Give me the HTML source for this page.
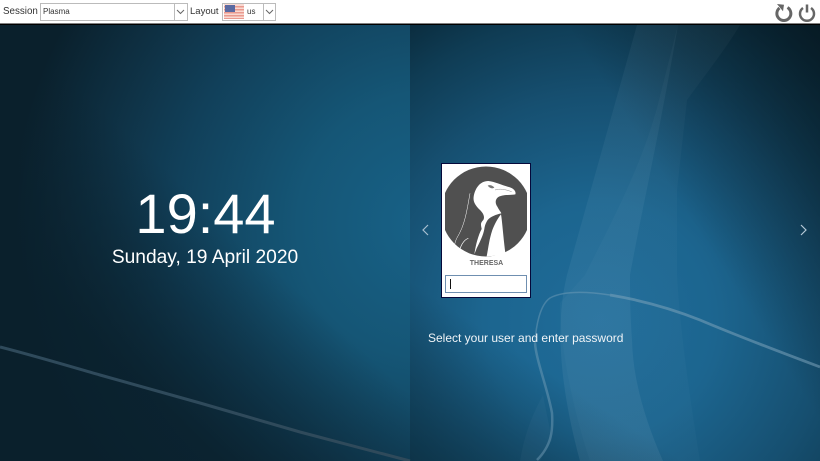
<!DOCTYPE html>
<html><head><meta charset="utf-8"><style>
html,body{margin:0;padding:0;width:820px;height:461px;overflow:hidden;background:#0a202d;font-family:"Liberation Sans",sans-serif}
svg{position:absolute;left:0;top:0}
</style></head><body>
<svg width="820" height="461" viewBox="0 0 820 461" xmlns="http://www.w3.org/2000/svg">
<defs>
<radialGradient id="l" gradientUnits="userSpaceOnUse" cx="430" cy="225" r="440">
<stop offset="0" stop-color="#186288"/><stop offset=".3" stop-color="#155676"/><stop offset=".58" stop-color="#11405a"/><stop offset=".73" stop-color="#0f3347"/><stop offset=".95" stop-color="#0a202c"/><stop offset="1" stop-color="#0a202c"/>
</radialGradient>
<linearGradient id="lb" x1="330" y1="320" x2="210" y2="450" gradientUnits="userSpaceOnUse"><stop offset="0" stop-color="#0a202c" stop-opacity="0"/><stop offset="1" stop-color="#0a202c" stop-opacity=".85"/></linearGradient>
<radialGradient id="r" gradientUnits="userSpaceOnUse" cx="600" cy="320" r="390">
<stop offset="0" stop-color="#1f6c9a"/><stop offset=".3" stop-color="#1c658f"/><stop offset=".58" stop-color="#164f70"/><stop offset=".78" stop-color="#0f3c54"/><stop offset="1" stop-color="#07202d"/>
</radialGradient>
<linearGradient id="rt" x1="640" y1="140" x2="820" y2="25" gradientUnits="userSpaceOnUse"><stop offset="0" stop-color="#06161e" stop-opacity="0"/><stop offset="1" stop-color="#06161e" stop-opacity=".75"/></linearGradient>
<linearGradient id="rb" x1="500" y1="340" x2="420" y2="461" gradientUnits="userSpaceOnUse"><stop offset="0" stop-color="#0a2a3a" stop-opacity="0"/><stop offset="1" stop-color="#0a2a3a" stop-opacity=".7"/></linearGradient>
<linearGradient id="sw" gradientUnits="userSpaceOnUse" x1="0" y1="25" x2="0" y2="461"><stop offset="0" stop-color="#a8c4d4" stop-opacity=".06"/><stop offset=".55" stop-color="#b8d8ea" stop-opacity=".07"/><stop offset="1" stop-color="#b8c8d4" stop-opacity=".09"/></linearGradient>
<linearGradient id="sw2" gradientUnits="userSpaceOnUse" x1="0" y1="25" x2="0" y2="461"><stop offset="0" stop-color="#b8c4c8" stop-opacity=".04"/><stop offset="1" stop-color="#b8d8ea" stop-opacity=".025"/></linearGradient>
<clipPath id="pc"><rect x="445" y="166" width="82" height="92"/></clipPath>
</defs>
<rect width="410" height="461" fill="url(#l)"/>
<rect width="410" height="461" fill="url(#lb)"/>
<rect x="410" width="410" height="461" fill="url(#r)"/>
<rect x="410" width="410" height="461" fill="url(#rt)"/>
<rect x="410" width="410" height="461" fill="url(#rb)"/>
<path d="M637 25L567 275C556 320 558 380 580 461H663C645 420 633 380 632 340C630 310 630 290 630 275C640 220 660 130 678 25Z" fill="url(#sw)"/>
<path d="M678 25L657 108C640 170 610 225 585 275L560 303C560 340 570 400 590 461H700C690 400 680 330 677 275C677 230 677 200 677 190L687 100C705 75 725 50 740 25Z" fill="url(#sw2)"/>
<path d="M520 461C525 430 535 410 543 395L552 440L540 461Z" fill="#b8d8ea" opacity=".04"/>
<path d="M0 347C35 356 65 365 100 375L200 403L300 432L410 461" fill="none" stroke="#2f4a5b" stroke-width="3"/>
<path d="M820 367C780 352 740 337 700 320C670 308 640 300 610 295" fill="none" stroke="#7ba2ba" stroke-width="2.800" opacity=".55"/>
<path d="M610 295C590 292 565 290 550 298C540 305 536 325 535 343" fill="none" stroke="#7ba2ba" stroke-width="1.500" opacity=".45"/>
<path d="M535 343C536 360 548 390 552 413C553 430 552 445 537 460" fill="none" stroke="#7ba2ba" stroke-width="2.500" opacity=".45"/>
<rect width="820" height="24" fill="#fff"/>
<rect y="23.500" width="820" height="1.500" fill="#000"/>
<text x="3" y="14" font-size="9.800" fill="#333">Session</text>
<rect x="40.500" y="3.500" width="147" height="17" fill="#fff" stroke="#bbb"/>
<line x1="174.500" y1="4" x2="174.500" y2="20" stroke="#bbb"/>
<text x="43" y="14" font-size="8" fill="#333">Plasma</text>
<path d="M177 10l3.500 3.500 3.500-3.500" fill="none" stroke="#666"/>
<text x="190" y="14" font-size="9.500" fill="#333">Layout</text>
<rect x="222.500" y="3.500" width="53" height="17" fill="#fff" stroke="#bbb"/>
<line x1="263.500" y1="4" x2="263.500" y2="20" stroke="#bbb"/>
<rect x="224" y="4" width="20" height="15" fill="#f9d9d2"/>
<rect x="224" y="6" width="20" height="1.500" fill="#ea9a8f"/><rect x="224" y="9" width="20" height="1.500" fill="#ea9a8f"/><rect x="224" y="12" width="20" height="1.500" fill="#ea9a8f"/><rect x="224" y="15" width="20" height="1.500" fill="#ea9a8f"/><rect x="224" y="18" width="20" height="1" fill="#ea9a8f"/>
<rect x="225" y="5" width="10" height="7" fill="#5a6aa2"/>
<text x="247" y="14" font-size="8" fill="#333">us</text>
<path d="M266 10l3.500 3.500 3.500-3.500" fill="none" stroke="#666"/>
<path d="M779.500 8a7 7 0 1 0 8-.5" fill="none" stroke="#666" stroke-width="3"/><path d="M777 4l7 .8-1 6.500z" fill="#666"/>
<path d="M803 8a7 7 0 1 0 8 0" fill="none" stroke="#666" stroke-width="2.500"/><path d="M807 4.500v8" fill="none" stroke="#666" stroke-width="2.500"/>
<text x="205.500" y="233" font-size="56" fill="#fff" text-anchor="middle">19:44</text>
<text x="205" y="263" font-size="19.200" fill="#fff" text-anchor="middle">Sunday, 19 April 2020</text>
<path d="M428 225l-5 5 5 5" fill="none" stroke="#a8bfd0" stroke-width="1.200"/>
<path d="M801 225l5 5-5 5" fill="none" stroke="#b5c8d6" stroke-width="1.200"/>
<rect x="441.500" y="163.500" width="89" height="134" fill="#fff" stroke="#05083a"/>
<g clip-path="url(#pc)"><circle cx="486" cy="211.500" r="45" fill="#505050"/></g>
<g transform="translate(415 155) scale(.33333)">
<path d="M176 125C180 100 195 78 220 78C240 80 258 90 285 97C297 101 304 110 301 118C285 121 265 118 250 126C240 133 240 145 247 155C252 165 257 170 259 175C245 178 225 185 218 195C212 205 210 210 208 222C205 240 195 260 185 280L178 298C182 270 190 240 200 222C198 210 195 205 205 195C210 185 205 175 195 165C180 150 174 140 176 125Z" fill="#fff"/>
<path d="M258 178C262 200 265 250 272 300L215 304C220 280 222 255 232 225C240 205 248 190 258 178Z" fill="#fff"/>
<path d="M165 115C155 170 150 210 125 250C120 262 118 270 116 285" fill="none" stroke="#fff" stroke-width="1.500"/>
<path d="M160 250C145 255 135 275 132 295" fill="none" stroke="#fff" stroke-width="2"/>
<path d="M218 92C224 88 234 92 238 98C232 102 224 100 218 92Z" fill="#777"/>
<path d="M240 105C255 100 270 103 290 110" fill="none" stroke="#888" stroke-width="1.500"/>
</g>
<text x="486.500" y="265" font-size="7" font-weight="700" fill="#666" text-anchor="middle">THERESA</text>
<rect x="445.500" y="275.500" width="81" height="17" fill="#fff" stroke="#6f8fb0"/>
<line x1="450.500" y1="279" x2="450.500" y2="289" stroke="#111"/>
<text x="428" y="342" font-size="12" fill="#f0f4f7">Select your user and enter password</text>
</svg>
</body></html>
